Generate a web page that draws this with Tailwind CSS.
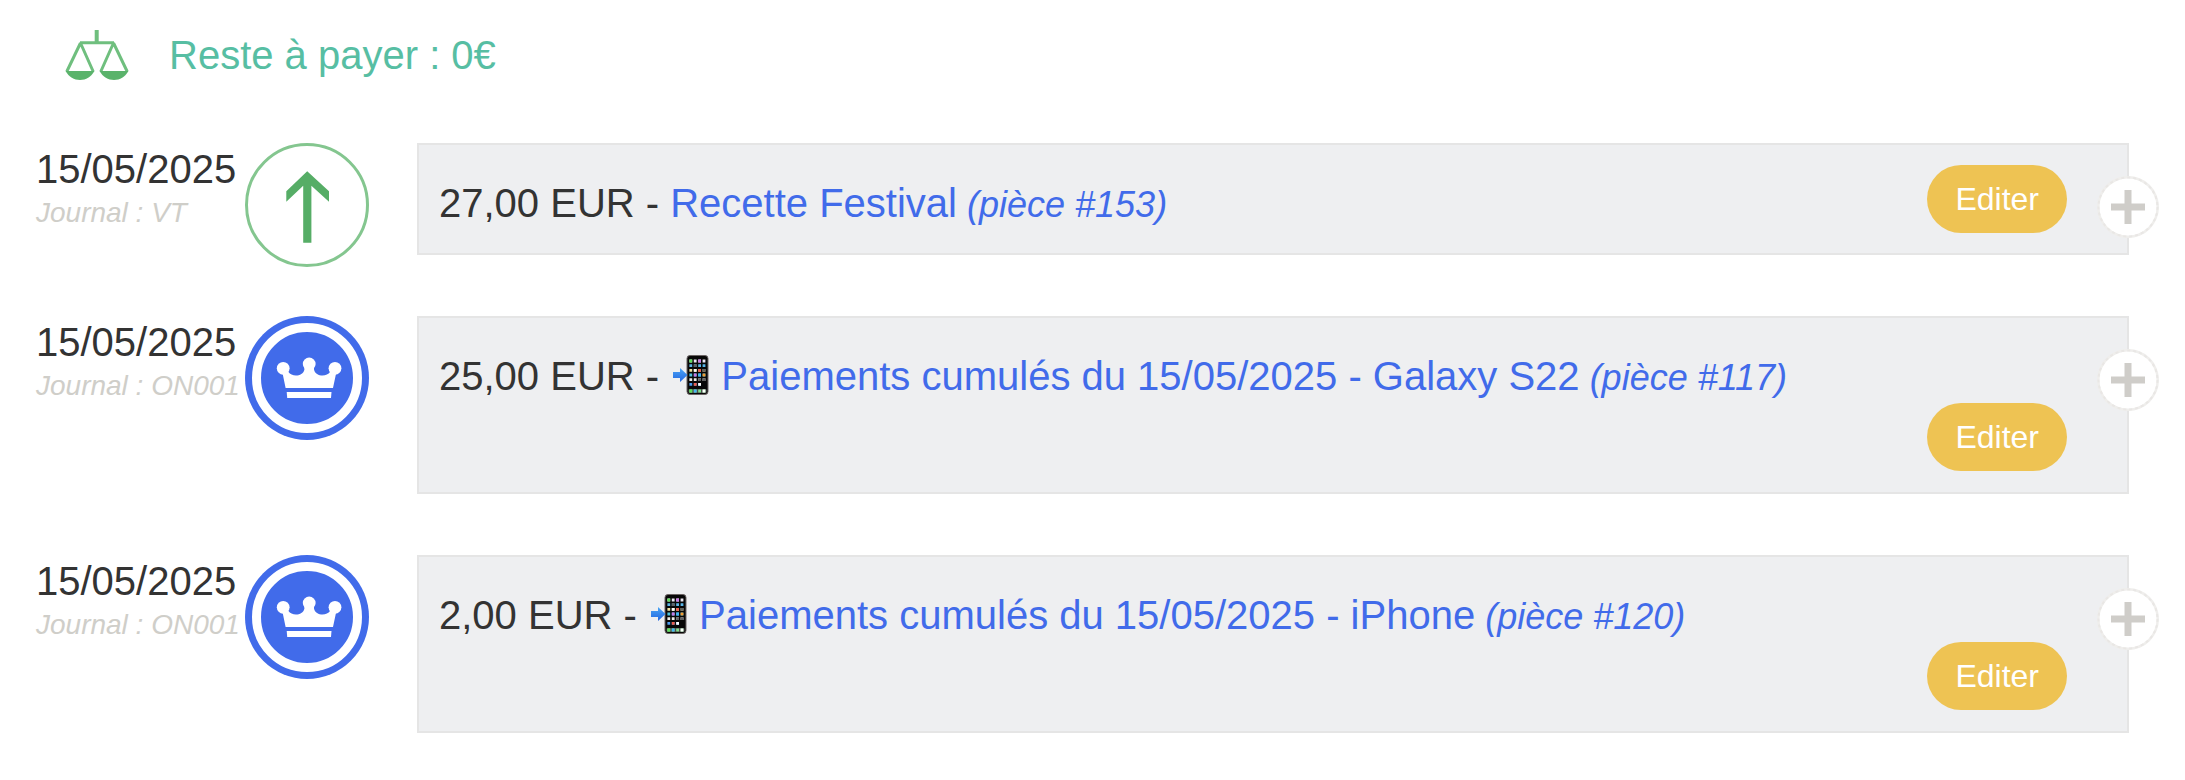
<!DOCTYPE html>
<html lang="fr">

<head>
  <meta charset="UTF-8" />
  <meta name="viewport" content="width=device-width, initial-scale=1.0" />
  <title>Reste à payer</title>
  <script src="https://cdn.jsdelivr.net/npm/@tailwindcss/browser@4"></script>
</head>

<body class="bg-white font-['Liberation_Sans',Arial,sans-serif] text-[40px] text-[#333333]">

  <!-- Shared icons -->
  <svg class="absolute size-0" aria-hidden="true">
    <!-- Crown in a double ring -->
    <symbol id="icon-crown" viewBox="0 0 124 124">
      <circle cx="62" cy="62" r="62" fill="#416bea" />
      <circle cx="62" cy="62" r="50.5" fill="none" stroke="#fff" stroke-width="9" />
      <g fill="#fff">
        <circle cx="38.2" cy="52.3" r="6.4" />
        <circle cx="64.2" cy="48" r="6.4" />
        <circle cx="90" cy="52.3" r="6.4" />
        <path d="M37.3 56 L40.6 72 H88 L91.4 56 L85 56 C82 61 70.5 61 69 53.5 V50 H59.4 V53.5 C58 61 46.5 61 43.5 56 Z" />
        <path d="M41.7 76 H86.5 L86 82 H42.2 Z" />
      </g>
    </symbol>

    <!-- Phone with incoming arrow -->
    <symbol id="icon-phone" viewBox="0 0 40 40">
      <linearGradient id="arrow-blue" x1="0" y1="0" x2="0" y2="1">
        <stop offset="0" stop-color="#4aa5f5" />
        <stop offset="1" stop-color="#2366e0" />
      </linearGradient>
      <rect x="17" y="0.5" width="21" height="39" rx="3" fill="#080808" stroke="#6b6464" />
      <path d="M3 17 H10 V13 L17.5 20 L10 27 V23 H3 Z" fill="url(#arrow-blue)" />
      <g fill="none" stroke-width="2.8" stroke-dasharray="2.8 1.6">
        <path d="M19.4 6 H36" stroke="#eee9f4" />
        <path d="M19.4 10.7 H36" stroke="#5bb6e8" />
        <path d="M19.4 15.3 H36" stroke="#f0e4a0" />
        <path d="M19.4 20 H36" stroke="#4fc4dc" />
        <path d="M19.4 24.7 H36" stroke="#f0efea" />
        <path d="M19.4 29.3 H32" stroke="#4d9cf0" />
      </g>
      <rect x="18.5" y="34" width="18" height="4" rx="1" fill="#4c4c4c" />
      <path d="M19.4 36 H36" stroke="#7ee08a" stroke-width="2.8" stroke-dasharray="2.8 1.6" />
      <path d="M19.4 6 h2.8 M19.4 36 h2.8" stroke="#5ee05a" stroke-width="2.8" />
      <path d="M28.2 6 h2.8 M23.8 20 h2.8" stroke="#c979e6" stroke-width="2.8" />
      <path d="M23.8 10.7 h2.8 M32.6 15.3 h2.8 M28.2 24.7 h2.8 M32.6 24.7 h2.8" stroke="#626262" stroke-width="2.8" />
      <path d="M28.2 15.3 h2.8 M23.8 29.3 h2.8" stroke="#ee5e4c" stroke-width="2.8" />
      <path d="M32.6 20 h2.8" stroke="#f59b32" stroke-width="2.8" />
      <path d="M28.2 29.3 h2.8 M32.6 36 h2.8 M23.8 15.3 h2.8" stroke="#fff" stroke-width="2.8" />
      <path d="M23.8 36 h2.8 M28.2 20 h2.8" stroke="#45b5f5" stroke-width="2.8" />
    </symbol>

    <!-- Plus in a dotted circle -->
    <symbol id="icon-plus" viewBox="0 0 62 62">
      <circle cx="31" cy="31" r="31" fill="#efeeec" />
      <circle cx="31" cy="31" r="28.5" fill="#fff" />
      <circle cx="31" cy="31" r="29.5" fill="none" stroke="#e9e7e5" stroke-width="2" stroke-dasharray="3 3" />
      <path d="M31 14 V48 M14 31 H48" stroke="#cfcdc9" stroke-width="7" />
    </symbol>
  </svg>

  <!-- Remaining balance -->
  <header class="flex items-center gap-10 pt-[29px] pl-[65px] text-[#57bea3]">
    <svg class="h-[50px] w-16" viewBox="0 0 64 50" fill="none" stroke="#6fbf7e" stroke-width="3" aria-hidden="true">
      <path d="M31.7 0 V12.5" stroke-width="4" />
      <path d="M15 12.7 H49" />
      <path d="M15.5 13 L1.8 41.5 M15.5 13 L28.2 41.5" />
      <path d="M48.5 13 L35.8 41.5 M48.5 13 L62.2 41.5" />
      <path d="M0.5 41 H29.5 C26 47 21 50 15 50 S4 47 0.5 41 Z" fill="#5ab36b" stroke="none" />
      <path d="M34.5 41 H63.5 C60 47 55 50 49 50 S38 47 34.5 41 Z" fill="#5ab36b" stroke="none" />
    </svg>
    <h1 class="leading-[52px]">Reste à payer : 0€</h1>
  </header>

  <!-- List of entries -->
  <main class="flex flex-col gap-[61px] pt-[62px] pr-14 pb-12 pl-9">

    <article class="flex items-start">
      <div class="w-[209px] shrink-0 pt-1 whitespace-nowrap">
        <p class="leading-[44px]">15/05/2025</p>
        <p class="text-[28px] leading-[43px] text-[#cfcec9] italic">Journal : VT</p>
      </div>
      <svg class="-mb-3 size-[124px] shrink-0" viewBox="0 0 124 124" aria-hidden="true">
        <circle cx="62" cy="62" r="60.5" fill="#fff" stroke="#84c68f" stroke-width="3" />
        <path d="M62.2 28.3 L84 48.3 V58.7 L66.4 42.8 V99.7 H58.2 V42.8 L41.3 58.7 V48.3 Z" fill="#56ad66" />
      </svg>
      <div class="relative ml-12 flex flex-1 flex-wrap items-start border-2 border-[#e5e5e5] bg-[#eeeff1] py-5 pr-[60px] pl-5">
        <h2 class="pt-3 leading-[52px]">27,00 EUR - <a href="#" class="text-[#416bea]">Recette Festival<i class="text-[36px] leading-none"> (pièce #153)</i></a></h2>
        <button type="button" class="ml-auto h-[68px] rounded-full bg-[#eec353] px-7 text-[32px] leading-[68px] text-white">Editer</button>
        <button type="button" aria-label="Ajouter" class="absolute top-[31px] -right-8 size-[62px]">
          <svg class="size-full"><use href="#icon-plus" /></svg>
        </button>
      </div>
    </article>

    <article class="flex items-start">
      <div class="w-[209px] shrink-0 pt-1 whitespace-nowrap">
        <p class="leading-[44px]">15/05/2025</p>
        <p class="text-[28px] leading-[43px] text-[#cfcec9] italic">Journal : ON001</p>
      </div>
      <svg class="size-[124px] shrink-0" aria-hidden="true"><use href="#icon-crown" /></svg>
      <div class="relative ml-12 flex flex-1 flex-wrap items-start border-2 border-[#e5e5e5] bg-[#eeeff1] pt-5 pr-[60px] pb-[21px] pl-5">
        <h2 class="basis-full pt-3 pb-px leading-[52px]">25,00 EUR - <a href="#" class="text-[#416bea]"><svg class="inline size-10 align-[-5px]" role="img" aria-label="Téléphone"><use href="#icon-phone" /></svg> Paiements cumulés du 15/05/2025 - Galaxy S22<i class="text-[36px] leading-none"> (pièce #117)</i></a></h2>
        <button type="button" class="ml-auto h-[68px] rounded-full bg-[#eec353] px-7 text-[32px] leading-[68px] text-white">Editer</button>
        <button type="button" aria-label="Ajouter" class="absolute top-[31px] -right-8 size-[62px]">
          <svg class="size-full"><use href="#icon-plus" /></svg>
        </button>
      </div>
    </article>

    <article class="flex items-start">
      <div class="w-[209px] shrink-0 pt-1 whitespace-nowrap">
        <p class="leading-[44px]">15/05/2025</p>
        <p class="text-[28px] leading-[43px] text-[#cfcec9] italic">Journal : ON001</p>
      </div>
      <svg class="size-[124px] shrink-0" aria-hidden="true"><use href="#icon-crown" /></svg>
      <div class="relative ml-12 flex flex-1 flex-wrap items-start border-2 border-[#e5e5e5] bg-[#eeeff1] pt-5 pr-[60px] pb-[21px] pl-5">
        <h2 class="basis-full pt-3 pb-px leading-[52px]">2,00 EUR - <a href="#" class="text-[#416bea]"><svg class="inline size-10 align-[-5px]" role="img" aria-label="Téléphone"><use href="#icon-phone" /></svg> Paiements cumulés du 15/05/2025 - iPhone<i class="text-[36px] leading-none"> (pièce #120)</i></a></h2>
        <button type="button" class="ml-auto h-[68px] rounded-full bg-[#eec353] px-7 text-[32px] leading-[68px] text-white">Editer</button>
        <button type="button" aria-label="Ajouter" class="absolute top-[31px] -right-8 size-[62px]">
          <svg class="size-full"><use href="#icon-plus" /></svg>
        </button>
      </div>
    </article>

  </main>
</body>

</html>
